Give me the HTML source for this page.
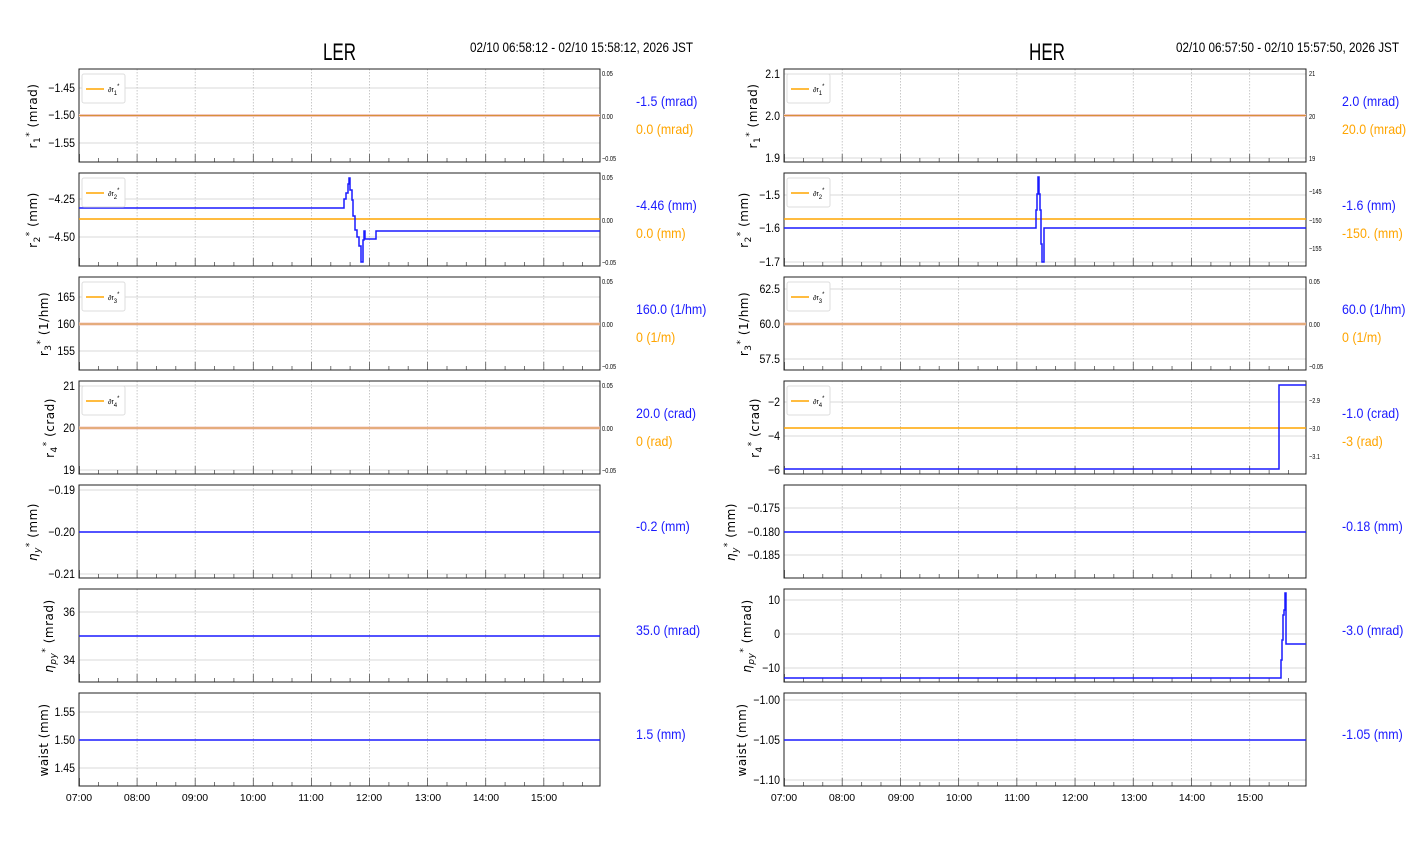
<!DOCTYPE html>
<html><head><meta charset="utf-8"><style>
html,body{margin:0;padding:0;background:#fff;width:1412px;height:864px;overflow:hidden}
svg{display:block}
text{font-family:"Liberation Sans Narrow","Liberation Sans",sans-serif;fill:#000}
.t{font-size:12px}
.x{font-size:10.5px}
.s{font-size:7px}
.yl{font-family:"DejaVu Sans","Liberation Sans",sans-serif;font-size:12px;letter-spacing:0.5px}
.b{fill:#1a1aff;font-size:13.5px}
.o{fill:#ffa500;font-size:13.5px}
</style></head><body>
<svg width="1412" height="864" viewBox="0 0 1412 864" xmlns="http://www.w3.org/2000/svg">
<defs>
<g id="g">
<g stroke="#bbb" stroke-width="0.8" stroke-dasharray="1.5,1.5">
<line x1="58.1" y1="0" x2="58.1" y2="93"/><line x1="116.2" y1="0" x2="116.2" y2="93"/><line x1="174.3" y1="0" x2="174.3" y2="93"/><line x1="232.4" y1="0" x2="232.4" y2="93"/><line x1="290.5" y1="0" x2="290.5" y2="93"/><line x1="348.6" y1="0" x2="348.6" y2="93"/><line x1="406.7" y1="0" x2="406.7" y2="93"/><line x1="464.8" y1="0" x2="464.8" y2="93"/>
</g>
<path stroke="#555" stroke-width="0.8" fill="none" d="M0.5 85v8M19.4 89v4M38.7 89v4M58.1 85v8M77.5 89v4M96.8 89v4M116.2 85v8M135.6 89v4M154.9 89v4M174.3 85v8M193.7 89v4M213 89v4M232.4 85v8M251.8 89v4M271.1 89v4M290.5 85v8M309.9 89v4M329.2 89v4M348.6 85v8M368 89v4M387.3 89v4M406.7 85v8M426.1 89v4M445.4 89v4M464.8 85v8M484.2 89v4M503.5 89v4"/>
<rect x="0" y="0" width="521" height="93" fill="none" stroke="#222" stroke-width="1"/>
</g>
<g id="lg"><rect x="3" y="5" width="43" height="29" rx="2" fill="#fff" stroke="#ddd"/><line x1="7" y1="20" x2="25" y2="20" stroke="#ffa500" stroke-width="1.5"/></g>
</defs>

<text x="323" y="60" font-size="24" textLength="33" lengthAdjust="spacingAndGlyphs">LER</text>
<text x="470" y="52" font-size="14" textLength="223" lengthAdjust="spacingAndGlyphs">02/10 06:58:12 - 02/10 15:58:12, 2026 JST</text>
<text x="1029" y="60" font-size="24" textLength="36" lengthAdjust="spacingAndGlyphs">HER</text>
<text x="1176" y="52" font-size="14" textLength="223" lengthAdjust="spacingAndGlyphs">02/10 06:57:50 - 02/10 15:57:50, 2026 JST</text>

<!-- ========== LEFT ========== -->
<g stroke="#ccc" stroke-width="0.8">
<line x1="79" y1="88" x2="600" y2="88"/><line x1="79" y1="143" x2="600" y2="143"/>
<line x1="79" y1="199" x2="600" y2="199"/><line x1="79" y1="237" x2="600" y2="237"/>
<line x1="79" y1="297" x2="600" y2="297"/><line x1="79" y1="351" x2="600" y2="351"/>
<line x1="79" y1="386" x2="600" y2="386"/><line x1="79" y1="470" x2="600" y2="470"/>
<line x1="79" y1="490" x2="600" y2="490"/><line x1="79" y1="574" x2="600" y2="574"/>
<line x1="79" y1="612" x2="600" y2="612"/><line x1="79" y1="660" x2="600" y2="660"/>
<line x1="79" y1="712" x2="600" y2="712"/><line x1="79" y1="768" x2="600" y2="768"/>
</g>
<use href="#g" x="79" y="69"/><use href="#g" x="79" y="173"/><use href="#g" x="79" y="277"/><use href="#g" x="79" y="381"/><use href="#g" x="79" y="485"/><use href="#g" x="79" y="589"/><use href="#g" x="79" y="693"/>
<g stroke-width="1.5" fill="none">
<line x1="79" y1="115.5" x2="600" y2="115.5" stroke="#f2c8c0" stroke-width="3"/>
<line x1="79" y1="115.5" x2="600" y2="115.5" stroke="#d8903a" stroke-width="1"/>
<line x1="79" y1="219" x2="600" y2="219" stroke="#ffa500"/>
<path stroke="#1a1aff" d="M79 208H344V199H346V193H348V184H349V178H350V190H352V200H353V216H355V230H357V237H359V246H361V262H363V240H364V231H365V239H376V231H600"/>
<line x1="79" y1="324" x2="600" y2="324" stroke="#f2c8c0" stroke-width="3"/>
<line x1="79" y1="324" x2="600" y2="324" stroke="#d8903a" stroke-width="1"/>
<line x1="79" y1="428" x2="600" y2="428" stroke="#f2c8c0" stroke-width="3"/>
<line x1="79" y1="428" x2="600" y2="428" stroke="#d8903a" stroke-width="1"/>
<line x1="79" y1="532" x2="600" y2="532" stroke="#1a1aff"/>
<line x1="79" y1="636" x2="600" y2="636" stroke="#1a1aff"/>
<line x1="79" y1="740" x2="600" y2="740" stroke="#1a1aff"/>
</g>
<use href="#lg" x="79" y="69"/><use href="#lg" x="79" y="173"/><use href="#lg" x="79" y="277"/><use href="#lg" x="79" y="381"/>
<text class="s" x="108" y="92">∂r<tspan dy="3" font-size="6">1</tspan><tspan dy="-7" font-size="6">*</tspan></text>
<text class="s" x="108" y="196">∂r<tspan dy="3" font-size="6">2</tspan><tspan dy="-7" font-size="6">*</tspan></text>
<text class="s" x="108" y="300">∂r<tspan dy="3" font-size="6">3</tspan><tspan dy="-7" font-size="6">*</tspan></text>
<text class="s" x="108" y="404">∂r<tspan dy="3" font-size="6">4</tspan><tspan dy="-7" font-size="6">*</tspan></text>
<g text-anchor="end" transform="translate(75,0) scale(0.88,1) translate(-75,0)">
<text class="t" x="75" y="92">−1.45</text><text class="t" x="75" y="119">−1.50</text><text class="t" x="75" y="147">−1.55</text>
<text class="t" x="75" y="203">−4.25</text><text class="t" x="75" y="241">−4.50</text>
<text class="t" x="75" y="301">165</text><text class="t" x="75" y="328">160</text><text class="t" x="75" y="355">155</text>
<text class="t" x="75" y="390">21</text><text class="t" x="75" y="432">20</text><text class="t" x="75" y="474">19</text>
<text class="t" x="75" y="494">−0.19</text><text class="t" x="75" y="536">−0.20</text><text class="t" x="75" y="578">−0.21</text>
<text class="t" x="75" y="616">36</text><text class="t" x="75" y="664">34</text>
<text class="t" x="75" y="716">1.55</text><text class="t" x="75" y="744">1.50</text><text class="t" x="75" y="772">1.45</text>
</g>
<g transform="translate(602,0) scale(0.8,1) translate(-602,0)">
<text class="s" x="602" y="76">0.05</text><text class="s" x="602" y="119">0.00</text><text class="s" x="602" y="161">−0.05</text>
<text class="s" x="602" y="180">0.05</text><text class="s" x="602" y="223">0.00</text><text class="s" x="602" y="265">−0.05</text>
<text class="s" x="602" y="284">0.05</text><text class="s" x="602" y="327">0.00</text><text class="s" x="602" y="369">−0.05</text>
<text class="s" x="602" y="388">0.05</text><text class="s" x="602" y="431">0.00</text><text class="s" x="602" y="473">−0.05</text>
</g>
<g text-anchor="middle">
<text class="x" x="79" y="801">07:00</text><text class="x" x="137" y="801">08:00</text><text class="x" x="195" y="801">09:00</text><text class="x" x="253" y="801">10:00</text><text class="x" x="311" y="801">11:00</text><text class="x" x="369" y="801">12:00</text><text class="x" x="428" y="801">13:00</text><text class="x" x="486" y="801">14:00</text><text class="x" x="544" y="801">15:00</text>
</g>
<g transform="translate(636,0) scale(0.92,1) translate(-636,0)">
<text class="b" x="636" y="106">-1.5 (mrad)</text><text class="o" x="636" y="134">0.0 (mrad)</text>
<text class="b" x="636" y="210">-4.46 (mm)</text><text class="o" x="636" y="238">0.0 (mm)</text>
<text class="b" x="636" y="314">160.0 (1/hm)</text><text class="o" x="636" y="342">0 (1/m)</text>
<text class="b" x="636" y="418">20.0 (crad)</text><text class="o" x="636" y="446">0 (rad)</text>
<text class="b" x="636" y="531">-0.2 (mm)</text>
<text class="b" x="636" y="635">35.0 (mrad)</text>
<text class="b" x="636" y="739">1.5 (mm)</text>
</g>
<g text-anchor="middle">
<text class="yl" transform="translate(37,116) rotate(-90)">r<tspan dy="3" font-size="9">1</tspan><tspan dy="-8" font-size="9">*</tspan><tspan dy="5"> (mrad)</tspan></text>
<text class="yl" transform="translate(37,220) rotate(-90)">r<tspan dy="3" font-size="9">2</tspan><tspan dy="-8" font-size="9">*</tspan><tspan dy="5"> (mm)</tspan></text>
<text class="yl" transform="translate(48,324) rotate(-90)">r<tspan dy="3" font-size="9">3</tspan><tspan dy="-8" font-size="9">*</tspan><tspan dy="5"> (1/hm)</tspan></text>
<text class="yl" transform="translate(54,428) rotate(-90)">r<tspan dy="3" font-size="9">4</tspan><tspan dy="-8" font-size="9">*</tspan><tspan dy="5"> (crad)</tspan></text>
<text class="yl" transform="translate(37,532) rotate(-90)"><tspan font-style="italic">η</tspan><tspan dy="3" font-size="9" font-style="italic">y</tspan><tspan dy="-8" font-size="9">*</tspan><tspan dy="5"> (mm)</tspan></text>
<text class="yl" transform="translate(53,636) rotate(-90)"><tspan font-style="italic">η</tspan><tspan dy="3" font-size="9" font-style="italic">py</tspan><tspan dy="-8" font-size="9">*</tspan><tspan dy="5"> (mrad)</tspan></text>
<text class="yl" transform="translate(48,740) rotate(-90)">waist (mm)</text>
</g>

<!-- ========== RIGHT ========== -->
<g stroke="#ccc" stroke-width="0.8">
<line x1="784" y1="74" x2="1306" y2="74"/><line x1="784" y1="158" x2="1306" y2="158"/>
<line x1="784" y1="195" x2="1306" y2="195"/><line x1="784" y1="262" x2="1306" y2="262"/>
<line x1="784" y1="289" x2="1306" y2="289"/><line x1="784" y1="359" x2="1306" y2="359"/>
<line x1="784" y1="402" x2="1306" y2="402"/><line x1="784" y1="436" x2="1306" y2="436"/>
<line x1="784" y1="508" x2="1306" y2="508"/><line x1="784" y1="555" x2="1306" y2="555"/>
<line x1="784" y1="600" x2="1306" y2="600"/><line x1="784" y1="634" x2="1306" y2="634"/><line x1="784" y1="668" x2="1306" y2="668"/>
<line x1="784" y1="700" x2="1306" y2="700"/><line x1="784" y1="780" x2="1306" y2="780"/>
</g>
<g transform="translate(784,0) scale(1.0019,1)"><use href="#g" y="69"/><use href="#g" y="173"/><use href="#g" y="277"/><use href="#g" y="381"/><use href="#g" y="485"/><use href="#g" y="589"/><use href="#g" y="693"/></g>
<g stroke-width="1.5" fill="none">
<line x1="784" y1="115.5" x2="1306" y2="115.5" stroke="#f2c8c0" stroke-width="3"/>
<line x1="784" y1="115.5" x2="1306" y2="115.5" stroke="#d8903a" stroke-width="1"/>
<line x1="784" y1="219" x2="1306" y2="219" stroke="#ffa500"/>
<path stroke="#1a1aff" d="M784 228H1036V210H1037V194H1038V177H1039V194H1040V210H1041V244H1042V262H1044V228H1306"/>
<line x1="784" y1="324" x2="1306" y2="324" stroke="#f2c8c0" stroke-width="3"/>
<line x1="784" y1="324" x2="1306" y2="324" stroke="#d8903a" stroke-width="1"/>
<line x1="784" y1="428" x2="1306" y2="428" stroke="#ffa500"/>
<path stroke="#1a1aff" d="M784 469H1279V385H1306"/>
<line x1="784" y1="532" x2="1306" y2="532" stroke="#1a1aff"/>
<path stroke="#1a1aff" d="M784 678H1281V660H1282V640H1283V615H1284V610H1285V593H1286V644H1306"/>
<line x1="784" y1="740" x2="1306" y2="740" stroke="#1a1aff"/>
</g>
<use href="#lg" x="784" y="69"/><use href="#lg" x="784" y="173"/><use href="#lg" x="784" y="277"/><use href="#lg" x="784" y="381"/>
<text class="s" x="813" y="92">∂r<tspan dy="3" font-size="6">1</tspan><tspan dy="-7" font-size="6">*</tspan></text>
<text class="s" x="813" y="196">∂r<tspan dy="3" font-size="6">2</tspan><tspan dy="-7" font-size="6">*</tspan></text>
<text class="s" x="813" y="300">∂r<tspan dy="3" font-size="6">3</tspan><tspan dy="-7" font-size="6">*</tspan></text>
<text class="s" x="813" y="404">∂r<tspan dy="3" font-size="6">4</tspan><tspan dy="-7" font-size="6">*</tspan></text>
<g text-anchor="end" transform="translate(780,0) scale(0.88,1) translate(-780,0)">
<text class="t" x="780" y="78">2.1</text><text class="t" x="780" y="120">2.0</text><text class="t" x="780" y="162">1.9</text>
<text class="t" x="780" y="199">−1.5</text><text class="t" x="780" y="232">−1.6</text><text class="t" x="780" y="266">−1.7</text>
<text class="t" x="780" y="293">62.5</text><text class="t" x="780" y="328">60.0</text><text class="t" x="780" y="363">57.5</text>
<text class="t" x="780" y="406">−2</text><text class="t" x="780" y="440">−4</text><text class="t" x="780" y="474">−6</text>
<text class="t" x="780" y="512">−0.175</text><text class="t" x="780" y="536">−0.180</text><text class="t" x="780" y="559">−0.185</text>
<text class="t" x="780" y="604">10</text><text class="t" x="780" y="638">0</text><text class="t" x="780" y="672">−10</text>
<text class="t" x="780" y="704">−1.00</text><text class="t" x="780" y="744">−1.05</text><text class="t" x="780" y="784">−1.10</text>
</g>
<g transform="translate(1309,0) scale(0.8,1) translate(-1309,0)">
<text class="s" x="1309" y="76">21</text><text class="s" x="1309" y="119">20</text><text class="s" x="1309" y="161">19</text>
<text class="s" x="1309" y="194">−145</text><text class="s" x="1309" y="223">−150</text><text class="s" x="1309" y="251">−155</text>
<text class="s" x="1309" y="284">0.05</text><text class="s" x="1309" y="327">0.00</text><text class="s" x="1309" y="369">−0.05</text>
<text class="s" x="1309" y="403">−2.9</text><text class="s" x="1309" y="431">−3.0</text><text class="s" x="1309" y="459">−3.1</text>
</g>
<g text-anchor="middle">
<text class="x" x="784" y="801">07:00</text><text class="x" x="842" y="801">08:00</text><text class="x" x="901" y="801">09:00</text><text class="x" x="959" y="801">10:00</text><text class="x" x="1017" y="801">11:00</text><text class="x" x="1075" y="801">12:00</text><text class="x" x="1134" y="801">13:00</text><text class="x" x="1192" y="801">14:00</text><text class="x" x="1250" y="801">15:00</text>
</g>
<g transform="translate(1342,0) scale(0.92,1) translate(-1342,0)">
<text class="b" x="1342" y="106">2.0 (mrad)</text><text class="o" x="1342" y="134">20.0 (mrad)</text>
<text class="b" x="1342" y="210">-1.6 (mm)</text><text class="o" x="1342" y="238">-150. (mm)</text>
<text class="b" x="1342" y="314">60.0 (1/hm)</text><text class="o" x="1342" y="342">0 (1/m)</text>
<text class="b" x="1342" y="418">-1.0 (crad)</text><text class="o" x="1342" y="446">-3 (rad)</text>
<text class="b" x="1342" y="531">-0.18 (mm)</text>
<text class="b" x="1342" y="635">-3.0 (mrad)</text>
<text class="b" x="1342" y="739">-1.05 (mm)</text>
</g>
<g text-anchor="middle">
<text class="yl" transform="translate(757,116) rotate(-90)">r<tspan dy="3" font-size="9">1</tspan><tspan dy="-8" font-size="9">*</tspan><tspan dy="5"> (mrad)</tspan></text>
<text class="yl" transform="translate(748,220) rotate(-90)">r<tspan dy="3" font-size="9">2</tspan><tspan dy="-8" font-size="9">*</tspan><tspan dy="5"> (mm)</tspan></text>
<text class="yl" transform="translate(748,324) rotate(-90)">r<tspan dy="3" font-size="9">3</tspan><tspan dy="-8" font-size="9">*</tspan><tspan dy="5"> (1/hm)</tspan></text>
<text class="yl" transform="translate(759,428) rotate(-90)">r<tspan dy="3" font-size="9">4</tspan><tspan dy="-8" font-size="9">*</tspan><tspan dy="5"> (crad)</tspan></text>
<text class="yl" transform="translate(735,532) rotate(-90)"><tspan font-style="italic">η</tspan><tspan dy="3" font-size="9" font-style="italic">y</tspan><tspan dy="-8" font-size="9">*</tspan><tspan dy="5"> (mm)</tspan></text>
<text class="yl" transform="translate(751,636) rotate(-90)"><tspan font-style="italic">η</tspan><tspan dy="3" font-size="9" font-style="italic">py</tspan><tspan dy="-8" font-size="9">*</tspan><tspan dy="5"> (mrad)</tspan></text>
<text class="yl" transform="translate(746,740) rotate(-90)">waist (mm)</text>
</g>
</svg>
</body></html>
